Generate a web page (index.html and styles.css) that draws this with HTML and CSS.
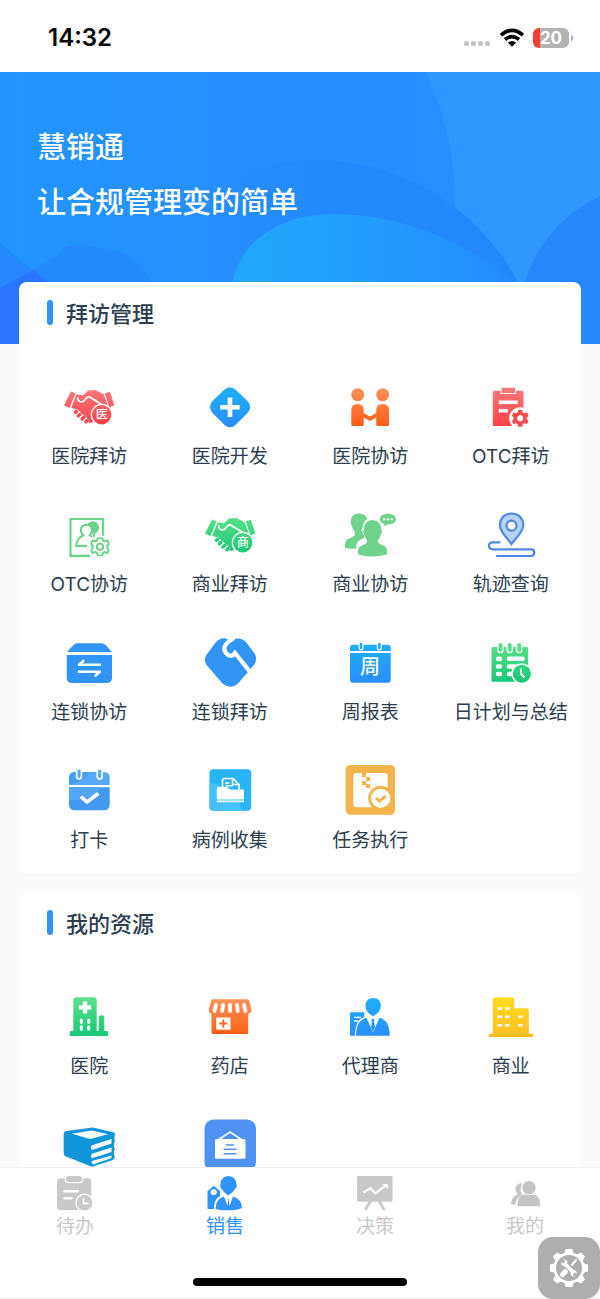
FILE: index.html
```html
<!DOCTYPE html>
<html lang="zh-CN">
<head>
    <meta charset="UTF-8">
    <meta name="viewport" content="width=device-width, initial-scale=1.0">
    <title>慧销通</title>
    <link rel="stylesheet" href="styles.css">
</head>
<body>

    <!-- shared gradients and symbols -->
    <svg class="defs" aria-hidden="true">
        <defs>
            <linearGradient id="red" gradientUnits="userSpaceOnUse" x1="0" y1="6" x2="0" y2="46"><stop offset="0" stop-color="#fb7c80"/><stop offset="1" stop-color="#fd3f45"/></linearGradient>
            <linearGradient id="blue" gradientUnits="userSpaceOnUse" x1="0" y1="6" x2="0" y2="46"><stop offset="0" stop-color="#1fb0fb"/><stop offset="1" stop-color="#2b8dfd"/></linearGradient>
            <linearGradient id="orange" gradientUnits="userSpaceOnUse" x1="0" y1="6" x2="0" y2="46"><stop offset="0" stop-color="#fe9560"/><stop offset="1" stop-color="#fe5a10"/></linearGradient>
            <linearGradient id="green" gradientUnits="userSpaceOnUse" x1="0" y1="6" x2="0" y2="46"><stop offset="0" stop-color="#60e08a"/><stop offset="1" stop-color="#14c877"/></linearGradient>
            <linearGradient id="yellow" gradientUnits="userSpaceOnUse" x1="0" y1="6" x2="0" y2="46"><stop offset="0" stop-color="#ffdc22"/><stop offset="1" stop-color="#ffbd22"/></linearGradient>
            <linearGradient id="glow" x1="0" y1="0" x2="1" y2="0"><stop offset="0" stop-color="#22a8fd"/><stop offset=".45" stop-color="#229dfd"/><stop offset="1" stop-color="#248bfd"/></linearGradient>
            <linearGradient id="fade" x1="0" y1="0" x2="1" y2="0"><stop offset=".25" stop-color="#2489fd" stop-opacity="0"/><stop offset=".5" stop-color="#2489fd"/><stop offset="1" stop-color="#2487fd"/></linearGradient>
            <linearGradient id="sky" x1="0" y1="0" x2="1" y2="0"><stop offset="0" stop-color="#2295fd"/><stop offset=".35" stop-color="#268ffd"/><stop offset="1" stop-color="#288ffd"/></linearGradient>
        </defs>
        <symbol id="shake" viewBox="0 0 52 52">
            <path d="M8 10.500L12.500 12.200L6.500 27L1 24.600ZM41.800 12.200L47 10.800L51.300 24.300L46.300 26.500Z"/>
            <path d="M13.600 13.200L20 14.300L25 9.600L32 9L40.600 13L45.300 26L42 32L28 42Q25.500 42.500 24.500 40L14 29L8.200 26.500Z"/>
            <path d="M14.500 16.500Q15 22 20 20.500Q22.500 18.500 24 16.500Q26 15 29 17.500L41 24.800" fill="none" stroke="#fff" stroke-width="1.800"/>
            <path d="M9.500 30L14 28L26 39L25.500 43H21Z" fill="#fff"/>
            <path d="M12.300 31.300L13.500 30.400M15.300 34.800L17 33.300M19 38L20.800 36.300M23 40.600L24.300 39.500" fill="none" stroke="currentColor" stroke-width="3.400" stroke-linecap="round"/>
            <circle cx="38.700" cy="33.700" r="11" fill="#fff"/>
            <circle cx="38.700" cy="33.700" r="9.700"/>
        </symbol>
        <symbol id="gear" viewBox="-10 -10 20 20">
            <path d="M-2.200 -9.600H2.200L3 -6.800L5 -5.700L7.800 -6.600L9.600 -3L7.600 -1V1L9.600 3L7.800 6.600L5 5.700L3 6.800L2.200 9.600H-2.200L-3 6.800L-5 5.700L-7.800 6.600L-9.600 3L-7.600 1V-1L-9.600 -3L-7.800 -6.600L-5 -5.700L-3 -6.800Z"/>
        </symbol>
    </svg>

    <header class="status">
        <span class="time">14:32</span>
        <span class="signals">
            <svg width="28" height="20" viewBox="0 0 28 20" fill="#c4c4c4"><circle cx="3.500" cy="15.500" r="2.600"/><circle cx="10.500" cy="15.500" r="2.600"/><circle cx="17.500" cy="15.500" r="2.600"/><circle cx="24.500" cy="15.500" r="2.600"/></svg>
            <svg width="26" height="20" viewBox="0 0 26 20" fill="none" stroke="#000" stroke-width="3.600"><path d="M2 7.200Q13 -2.600 24 7.200"/><path d="M6 11.500Q13 5.600 20 11.500"/><path d="M13 18.800L8.800 14.600Q13 11.200 17.200 14.600Z" fill="#000" stroke="none"/></svg>
            <span class="battery">20</span>
        </span>
    </header>

    <main class="content">
        <section class="hero">
            <svg class="hero-bg" viewBox="0 0 600 272" preserveAspectRatio="none" aria-hidden="true">
                <rect width="600" height="272" fill="url(#sky)"/>
                <path d="M425 0Q455 60 455 130Q455 200 430 272H600V0Z" fill="#3097fd"/>
                <circle cx="316" cy="316" r="228" fill="url(#fade)"/>
                <circle cx="660" cy="253" r="142" fill="#2687fc"/>
                <path d="M232 214C240 165 285 142 333 142C400 142 470 170 518 214Z" fill="url(#glow)"/>
                <path d="M33 198Q62 182 67 174Q95 174 119 180Q145 190 151 214H50Z" fill="#2489fd"/>
                <path d="M0 170Q15 186 33 198L0 216Z" fill="#2487fd"/>
                <path d="M0 216L33 198L50 212V272H0Z" fill="#2b74fd"/>
            </svg>
            <h1 class="hero-text">慧销通<br>让合规管理变的简单</h1>
        </section>

        <section class="card card-first">
            <h2 class="card-title">拜访管理</h2>
            <nav class="grid">
                <a class="item" href="#">
                    <svg class="icon" viewBox="0 0 52 52"><use href="#shake" fill="url(#red)" color="#fc484d"/><text class="badge" x="38.700" y="38">医</text></svg>
                    <span>医院拜访</span>
                </a>
                <a class="item" href="#">
                    <svg class="icon" viewBox="0 0 52 52">
                        <path d="M20 9Q26 3.600 32 9L43.500 20Q49 26 43.500 32L32 43.500Q26 49 20 43.500L8.500 32Q3.500 26 8.500 20Z" fill="url(#blue)"/>
                        <path d="M26 16.500V36M16.300 26.300H35.700" stroke="#fff" stroke-width="4.600"/>
                    </svg>
                    <span>医院开发</span>
                </a>
                <a class="item" href="#">
                    <svg class="icon" viewBox="0 0 52 52" fill="url(#orange)">
                        <circle cx="13.700" cy="13.700" r="6.500"/><circle cx="38.700" cy="13.700" r="6.500"/>
                        <path d="M7.300 29Q7.300 23 13.500 23Q19.700 23 19.700 29V32L26 35.500L32.300 32V29Q32.300 23 38.600 23Q45 23 45 29V43.500Q45 45 43.500 45H33.800Q32.300 45 32.300 43.500V36.500L26 40L19.700 36.500V43.500Q19.700 45 18.200 45H8.800Q7.300 45 7.300 43.500Z"/>
                    </svg>
                    <span>医院协访</span>
                </a>
                <a class="item" href="#">
                    <svg class="icon" viewBox="0 0 52 52" fill="url(#red)">
                        <rect x="7.800" y="9.700" width="30.700" height="35.300" rx="1.500"/>
                        <rect x="15.500" y="6" width="15.500" height="7" fill="#fff"/>
                        <rect x="16.500" y="6.700" width="13.500" height="5.300"/>
                        <path d="M13.800 21.300H32.800M13.800 29.700H22.800" stroke="#fff" stroke-width="3.400"/>
                        <circle cx="35.200" cy="37.300" r="11" fill="#fff"/>
                        <use href="#gear" x="26.500" y="28.600" width="17.400" height="17.400" fill="#fb4a50"/>
                        <circle cx="35.200" cy="37.300" r="3" fill="#fff"/>
                    </svg>
                    <span>OTC拜访</span>
                </a>
                <a class="item" href="#">
                    <svg class="icon" viewBox="0 0 52 52" fill="none" stroke="#6fd28c" stroke-width="2.200">
                        <path d="M40 27V10H7.500V46.800H27"/>
                        <circle cx="29.800" cy="18.500" r="6.300" fill="#6fd28c" stroke="none"/>
                        <path d="M31 25V29" stroke-width="2"/>
                        <path d="M24 37H13.200Q14 28.500 20.500 26.200Q17.500 24 17.800 20.500Q18.500 16 23.500 15.800Q28.800 16.200 29 21Q29 24 26.800 26.200L29 28" fill="#fff" stroke-width="2"/>
                        <circle cx="37" cy="37.700" r="11.500" fill="#fff" stroke="none"/>
                        <use href="#gear" x="27.500" y="28.200" width="19" height="19"/>
                        <circle cx="37" cy="37.700" r="3.200"/>
                    </svg>
                    <span>OTC协访</span>
                </a>
                <a class="item" href="#">
                    <svg class="icon" viewBox="0 0 52 52"><use href="#shake" fill="url(#green)" color="#22cc7b"/><text class="badge" x="38.700" y="38">商</text></svg>
                    <span>商业拜访</span>
                </a>
                <a class="item" href="#">
                    <svg class="icon" viewBox="0 0 52 52" fill="#6fd38b">
                        <path d="M7 12Q7 4.500 15 4.500Q22 4.800 23 10Q19 13 18.800 18L17.500 21Q18 24 20 26L20 29Q14 31 12.500 35L12 39.500Q5 40.500 1 38.500Q.5 32 4 30Q9.500 28 11 26V23Q8 20 8 17L6.800 15Z"/>
                        <path d="M28.300 11Q37 11.500 37.200 20L38 23L36.500 26Q36 29 33.800 31Q33.500 34 36 35Q41.500 37 42.500 39Q43.500 42 43 45.500Q36 47.500 28.500 47.500Q20 47.500 14.200 45.500Q13.500 41 15 38.500Q17 36.500 22 34.500Q23.500 33 23 31Q20.800 29 20.300 26L19 23L19.800 20Q20 11.500 28.300 11Z"/>
                        <path d="M43.800 4.800C48.500 4.800 52 7 52 10.300C52 13.500 48.500 15.500 44 15.500L40 17.200L40.500 15C37.500 14 35.800 12.500 35.800 10.300C35.800 7 39.500 4.800 43.800 4.800Z"/>
                        <path d="M39 10.300H41.300M42.800 10.300H45.100M46.600 10.300H48.900" stroke="#fff" stroke-width="2"/>
                    </svg>
                    <span>商业协访</span>
                </a>
                <a class="item" href="#">
                    <svg class="icon" viewBox="0 0 52 52" fill="none" stroke="#5089e2" stroke-width="2.200" stroke-linecap="round">
                        <path d="M26.500 35C23 30 14.800 23 14.800 16Q15.500 5 26.500 4.500Q37.700 5 38.300 16C38.300 23 30 30 26.500 35Z" fill="#b6d1fa"/>
                        <circle cx="26.500" cy="16.700" r="5" fill="#fff"/>
                        <path d="M14.500 33.300H8Q4 33.300 4 36.800Q4 40.300 8 40.300H46Q49.300 40.300 49.300 43.600Q49.300 47 46 47H12"/>
                    </svg>
                    <span>轨迹查询</span>
                </a>
                <a class="item" href="#">
                    <svg class="icon" viewBox="0 0 52 52" fill="#3394f8">
                        <path d="M4 15L10 8.500Q12 6.300 15 6.300H38Q41 6.300 43 8.500L49 15Z"/>
                        <path d="M3.700 18H49V40.500Q49 46 43.500 46H9.200Q3.700 46 3.700 40.500Z"/>
                        <path d="M20.300 24L16 27.700H36.800M16 34.700H36.800L32.500 38.500" fill="none" stroke="#fff" stroke-width="2.600" stroke-linecap="round" stroke-linejoin="round"/>
                    </svg>
                    <span>连锁协访</span>
                </a>
                <a class="item" href="#">
                    <svg class="icon" viewBox="0 0 52 52">
                        <path d="M12 5Q16.500 .5 22 1.500L26 4L30 2Q37 0 42 5L50.500 16.500Q54 22 50 28L34 46.500Q26.500 53 18.500 46.500L2.500 28Q-1 22.500 3 17Z" fill="#3394f8"/>
                        <path d="M47 36L31 16Q28 20.500 23.500 17.500Q18.500 13 21.500 8Q24.500 4 30 1" fill="none" stroke="#fff" stroke-width="4.200"/>
                    </svg>
                    <span>连锁拜访</span>
                </a>
                <a class="item" href="#">
                    <svg class="icon" viewBox="0 0 52 52">
                        <rect x="6" y="7.700" width="40.700" height="38" rx="3" fill="url(#blue)"/>
                        <path d="M6 15H46.700" stroke="#fff" stroke-width="2"/>
                        <path d="M17 6.500V11M35.300 6.500V11" stroke="#fff" stroke-width="5" stroke-linecap="round"/>
                        <path d="M17 7V11M35.300 7V11" stroke="#22a9fb" stroke-width="2.600" stroke-linecap="round"/>
                        <text class="week" x="26" y="37">周</text>
                    </svg>
                    <span>周报表</span>
                </a>
                <a class="item" href="#">
                    <svg class="icon" viewBox="0 0 52 52" fill="url(#green)">
                        <rect x="6.500" y="10" width="36.700" height="34.700" rx="1.500"/>
                        <path d="M15.500 8V13M24.800 8V13M34.200 8V13" stroke="#fff" stroke-width="6.500" stroke-linecap="round"/>
                        <path d="M15.500 8V13M24.800 8V13M34.200 8V13" stroke="#58dc88" stroke-width="3.800" stroke-linecap="round"/>
                        <path d="M13 21.700H15M13 29.500H15M13 37H15M24 21.700H37.500M24 29.500H30M24 37H28" stroke="#fff" stroke-width="4.600" stroke-linecap="round"/>
                        <circle cx="36.800" cy="36.700" r="10.500" fill="#fff"/>
                        <circle cx="36.800" cy="36.700" r="9"/>
                        <path d="M36 31.500V36.800L39.500 40.500" fill="none" stroke="#fff" stroke-width="2"/>
                    </svg>
                    <span>日计划与总结</span>
                </a>
                <a class="item" href="#">
                    <svg class="icon" viewBox="0 0 52 52">
                        <path d="M6 20V13Q6 7 12 7H40.700Q46.700 7 46.700 13V20Z" fill="#59a9f8"/>
                        <path d="M6 20V13Q6 7 12 7H27Q20 17 6 20Z" fill="#459ef5"/>
                        <path d="M6 22.200H46.700V39.300Q46.700 45.300 40.700 45.300H12Q6 45.300 6 39.300Z" fill="#4399f0"/>
                        <path d="M6 35Q30 36 38 22.200H6Z" fill="#55a6f7"/>
                        <path d="M16 4.500V11.500M36.700 4.500V11.500" stroke="#fff" stroke-width="6.500" stroke-linecap="round"/>
                        <path d="M16 6V11.500M36.700 6V11.500" stroke="#59a9f8" stroke-width="3.200" stroke-linecap="round"/>
                        <path d="M19 32.700L24 37L34.300 29.300" fill="none" stroke="#fff" stroke-width="3.600" stroke-linecap="round"/>
                    </svg>
                    <span>打卡</span>
                </a>
                <a class="item" href="#">
                    <svg class="icon" viewBox="0 0 52 52">
                        <rect x="5.500" y="4.300" width="41.700" height="41.400" rx="4" fill="#28b3f5"/>
                        <path d="M5.500 18Q30 18 38 45.700H9.500Q5.500 45.700 5.500 41.700Z" fill="#45bff8"/>
                        <path d="M18.500 23V15.500Q18.500 13.500 20.500 13.500H29L35 19.500V24M28.500 14V19.500H34.500M21 18H25.500M21 20.800H29" fill="none" stroke="#fff" stroke-width="1.600"/>
                        <path d="M12.800 23Q12.800 22 14 22H23.500L26 24.500H39Q40 24.500 40 25.500V34.500H12.800ZM12.800 35.500H40V37.300H12.800Z" fill="#fff"/>
                    </svg>
                    <span>病例收集</span>
                </a>
                <a class="item" href="#">
                    <svg class="icon" viewBox="0 0 52 52">
                        <rect x="1.700" y="0" width="49.300" height="49.700" rx="4.500" fill="#f4b44c"/>
                        <rect x="9.300" y="8" width="34.400" height="34.200" rx="3" fill="#fff"/>
                        <path d="M18 8H22V12H18ZM22 12H26V16H22ZM18 16H22V20H18ZM22 19H26V23H22Z" fill="#f4b44c"/>
                        <circle cx="36.700" cy="33.300" r="12.500" fill="#f4b44c"/>
                        <circle cx="36.700" cy="33.300" r="9.600" fill="#fff"/>
                        <path d="M32 33L35.500 36.300L41.500 31" fill="none" stroke="#f4b44c" stroke-width="3"/>
                    </svg>
                    <span>任务执行</span>
                </a>
            </nav>
        </section>

        <section class="card">
            <h2 class="card-title">我的资源</h2>
            <nav class="grid">
                <a class="item" href="#">
                    <svg class="icon" viewBox="0 0 52 52" fill="url(#green)">
                        <path d="M10.300 9.300Q10.300 6.300 13.300 6.300H30.700Q33.700 6.300 33.700 9.300V40H35.700V26.500Q35.700 24.300 38.500 24.300Q41.300 24.300 41.300 26.500V40H44Q45 40 45 41V44Q45 45 44 45H7.700Q6.700 45 6.700 44V41Q6.700 40 7.700 40H10.300Z"/>
                        <path d="M22 10.300V22.500M15.900 16.400H28.100" stroke="#fff" stroke-width="4.400"/>
                        <path d="M18.300 29V31.500M25.700 29V31.500M18.300 35.700V38.200M25.700 35.700V38.200" stroke="#fff" stroke-width="3" stroke-linecap="round"/>
                    </svg>
                    <span>医院</span>
                </a>
                <a class="item" href="#">
                    <svg class="icon" viewBox="0 0 52 52" fill="url(#orange)">
                        <path d="M8.500 8.300H43.500Q45 8.300 45.300 10L47.500 19.500Q47.500 22 44.200 22.500V41.500Q44.200 43 42.700 43H9Q7.500 43 7.500 41.500V22.500Q4.500 22 4.800 19.500L7 10Q7.300 8.300 8.500 8.300Z"/>
                        <path d="M12 14L10.500 20M19 14L18.200 20M26 14V20M33 14L33.800 20M40 14L41.500 20" stroke="#fff" stroke-width="3.800" stroke-linecap="round"/>
                        <rect x="12.200" y="26.500" width="14.300" height="12.200" fill="#fff"/>
                        <path d="M19.300 28.500V36.700M15.200 32.600H23.400" stroke="#fe6c28" stroke-width="2"/>
                    </svg>
                    <span>药店</span>
                </a>
                <a class="item" href="#">
                    <svg class="icon" viewBox="0 0 52 52" fill="url(#blue)">
                        <path d="M7.300 21.300H20.300V44.700H6V22.600Q6 21.300 7.300 21.300Z"/>
                        <path d="M10 26.300H17M10 30H14" stroke="#fff" stroke-width="1.300"/>
                        <path d="M11 45.500C11 34 14 27.500 21 26L29 27L37.500 26.500C43 28 46 34 46 45.500Z" fill="#fff"/>
                        <path d="M12 44.700C12 34.500 15.500 28.500 22.500 26.700L29 41.500L35.500 26.700C42.500 28.500 45.700 34.500 45.700 44.700Z"/>
                        <path d="M29 7Q36.800 7.200 36.800 15Q36.500 21.500 29 25.300Q21.500 21.500 21.500 15Q21.500 7.200 29 7Z"/>
                        <path d="M27.300 28H30.700L30 30.500L31 36L29 41L27 36L28 30.500Z"/>
                    </svg>
                    <span>代理商</span>
                </a>
                <a class="item" href="#">
                    <svg class="icon" viewBox="0 0 52 52" fill="url(#yellow)">
                        <path d="M7.800 9Q7.800 6.300 10.500 6.300H26.500Q29.200 6.300 29.200 9V17.300H41.500Q43.800 17.300 43.800 19.600V42.700H47.500Q48.500 42.700 48.500 44.300Q48.500 46 47.500 46H4.500Q3.500 46 3.500 44.300Q3.500 42.700 4.500 42.700H7.800Z"/>
                        <path d="M12.500 17.500H17M20 17.500H24.500M12.500 25.800H17M20 25.800H24.500M12.500 34.200H17M20 34.200H24.500M33.300 25.800H37.800M33.300 34.200H37.800" stroke="#fff" stroke-width="2.600"/>
                    </svg>
                    <span>商业</span>
                </a>
                <a class="item" href="#" aria-label="产品">
                    <svg class="icon" viewBox="0 0 52 52">
                        <path d="M3 12L30 8.500L51 13.500Q53 14.500 51.500 16.500V20L52 22L51 24V28L52 30L51 32V36L52 38L50 41L29 47.700L3 37.500Q.7 36.500 .7 34.500V14.500Q.7 12.500 3 12Z" fill="#1296db"/>
                        <path d="M9 14.800L29 11.500L45 15.300L27 20Z" fill="#fff"/>
                        <path d="M29 26.200L48.500 20V24.500L29 31Q26.500 28.500 29 26.200ZM29 34.700L48.500 28.500V33L29 39.300Q26.500 37 29 34.700ZM29 42L48.500 36.500V39L31 45.300Q27.500 45 29 42Z" fill="#fff"/>
                    </svg>
                </a>
                <a class="item" href="#" aria-label="公告">
                    <svg class="icon" viewBox="0 0 52 52">
                        <rect x=".5" y=".5" width="51.500" height="51.500" rx="9" fill="#5092f3"/>
                        <path d="M14 21L26 13L38 21" fill="none" stroke="#fff" stroke-width="1.600"/>
                        <rect x="11" y="20" width="30.500" height="19.700" rx="1.500" fill="#fff"/>
                        <path d="M22 26H30M19.500 30.300H32.500M19.500 34.700H32.500" stroke="#5092f3" stroke-width="1.600"/>
                    </svg>
                </a>
            </nav>
        </section>
    </main>

    <footer class="tabbar">
        <nav class="tabs">
            <a class="tab" href="#">
                <svg viewBox="0 0 36 36" fill="#c9c9c9">
                    <rect x="0" y="3.300" width="34.300" height="31.700" rx="3.500"/>
                    <rect x="7.700" y="0" width="18.600" height="8.300" rx="4" fill="#fff"/>
                    <rect x="9" y="1" width="16" height="6" rx="3"/>
                    <path d="M7.500 16.300H20.500M7.500 23.300H14.500" stroke="#fff" stroke-width="2.600" stroke-linecap="round"/>
                    <circle cx="27.500" cy="27.700" r="9.200" fill="#fff"/><circle cx="27.500" cy="27.700" r="7.800"/>
                    <path d="M26.500 23.500V28.500H31.500" fill="none" stroke="#fff" stroke-width="1.800"/>
                </svg>
                <span>待办</span>
            </a>
            <a class="tab active" href="#">
                <svg viewBox="0 0 36 36" fill="#2e93fb">
                    <path d="M.5 16L6.800 10.700L13 16V34H.5Z"/>
                    <circle cx="6.700" cy="17.300" r="3" fill="#fff"/>
                    <path d="M7 35.500C6.500 25 11 20.500 17 20H26L36 35.500Z" fill="#fff"/>
                    <path d="M8.500 34Q8.500 24 17 21.500L20.500 31L21.300 22L22.500 31L26 21.500Q35 24.500 35 33Q30 35.300 21.500 35.300Q12 35.300 8.500 34Z"/>
                    <path d="M21.300 1Q29 1.500 29.200 9Q30.500 10 29 13Q26 17.500 21.300 20.500Q17 18 13.800 13Q12.500 10 13.600 9Q14 1.500 21.300 1Z"/>
                </svg>
                <span>销售</span>
            </a>
            <a class="tab" href="#">
                <svg viewBox="0 0 36 36" fill="#c9c9c9">
                    <rect x="0" y="1" width="35.500" height="25.700" rx="1.500"/>
                    <path d="M13 27L8.700 34M22.500 27L26.800 34" stroke="#c9c9c9" stroke-width="2.800" stroke-linecap="round"/>
                    <path d="M6.500 17.700L13.300 13.200L18.500 18.300L28.500 10.500" fill="none" stroke="#fff" stroke-width="2.200"/>
                    <path d="M25 9H31V14Z" fill="#fff"/>
                </svg>
                <span>决策</span>
            </a>
            <a class="tab" href="#">
                <svg viewBox="0 0 36 36" fill="#c4c4c4">
                    <path d="M15 8Q7.500 9 8.500 15Q9 17.500 10.800 19Q4 22 4 29.500H8.500Q9.500 22.500 15 20Q12 13 15.500 8Z"/>
                    <circle cx="22" cy="12.700" r="6.700"/>
                    <path d="M10.300 31.300Q10.300 20 18 19.200Q22 21.500 26 19.200Q33.300 20 33.300 31.300Z"/>
                </svg>
                <span>我的</span>
            </a>
        </nav>
        <div class="home-bar"></div>
    </footer>

    <button class="tools" type="button" aria-label="工具">
        <svg width="40" height="40" viewBox="0 0 40 40">
            <path d="M16.500 1H23.500L24.500 5L28.500 6.600L32 4.500L36 8.500L33.800 12.500L35 15.500L39 16.500V23.500L35 24.500L33.800 27.500L36 31.500L32 35.500L28.500 33.400L24.500 35L23.500 39H16.500L15.500 35L11.500 33.400L8 35.500L4 31.500L6.200 27.500L5 24.500L1 23.500V16.500L5 15.500L6.200 12.500L4 8.500L8 4.500L11.500 6.600L15.500 5Z" fill="#fff"/>
            <circle cx="20" cy="20" r="13" fill="#aeaeae"/>
            <path d="M15.500 24.500L21 19M22.500 17.500L27.500 11.500" stroke="#fff" stroke-width="2"/>
            <path d="M13.500 26.500L16.500 23.500" stroke="#fff" stroke-width="5" stroke-linecap="round"/>
            <path d="M15 15L25 25" stroke="#aeaeae" stroke-width="6"/>
            <path d="M15 15L25 25" stroke="#fff" stroke-width="3.800"/>
            <path d="M11.800 14L15 16L16 12L13.500 11.500Q17.500 10.500 18.500 14Q18 18 14.500 18Q12 17 11.800 14ZM28.200 26L25 24L24 28L26.500 28.500Q22.500 29.500 21.500 26Q22 22 25.500 22Q28 23 28.200 26Z" fill="#fff"/>
        </svg>
    </button>

</body>
</html>
```
FILE: styles.css
```css
* {
    box-sizing: border-box;
}

body {
    margin: 0;
    height: 100vh;
    display: flex;
    flex-direction: column;
    overflow: hidden;
    background-color: #fff;
    color: #2c3e50;
    font-family: Inter, "Noto Sans CJK SC", sans-serif;
}

a {
    color: inherit;
    text-decoration: none;
}

svg {
    display: block;
}

.defs {
    position: absolute;
    width: 0;
    height: 0;
}

/* status bar */
.status {
    flex: none;
    display: flex;
    justify-content: space-between;
    align-items: center;
    height: 72px;
    padding: 4px 31px 0 48px;
    color: #000;
}

.time {
    font-size: 24px;
    font-weight: 600;
    line-height: 28px;
}

.signals {
    display: flex;
    align-items: center;
    gap: 8px;
}

.battery {
    position: relative;
    width: 36px;
    height: 20px;
    border-radius: 6px;
    background: linear-gradient(90deg, #fb3b30 7px, #b3b3b3 7px);
    color: #fff;
    font-size: 17px;
    font-weight: 700;
    line-height: 20px;
    text-align: center;
}

.battery::after {
    content: "";
    position: absolute;
    right: -4px;
    top: 7px;
    width: 2px;
    height: 6px;
    border-radius: 0 2px 2px 0;
    background: #b3b3b3;
}

/* scrolling part */
.content {
    flex: 1;
    min-height: 0;
    overflow: hidden;
    background-color: #fafafa;
}

.hero {
    position: relative;
    height: 272px;
    padding: 48px 37px;
}

.hero-bg {
    position: absolute;
    top: 0;
    left: 0;
    width: 100%;
    height: 100%;
}

.hero-text {
    position: relative;
    margin: 0;
    color: #fff;
    font-size: 29px;
    font-weight: 500;
    line-height: 55px;
}

.card {
    position: relative;
    margin: 0 19px 19px;
    padding-bottom: 17px;
    border-radius: 8px;
    background-color: #fff;
}

.card-first {
    margin-top: -62px;
}

.card-title {
    display: flex;
    align-items: center;
    gap: 13px;
    height: 60px;
    margin: 0 0 2px;
    padding-left: 28px;
    font-size: 22px;
    font-weight: 500;
}

.card-title::before {
    content: "";
    width: 6px;
    height: 25px;
    border-radius: 3px;
    background-color: #3394f8;
}

.grid {
    display: grid;
    grid-template-columns: repeat(4, 1fr);
}

.item {
    display: flex;
    flex-direction: column;
    align-items: center;
    gap: 10px;
    height: 128px;
    padding-top: 37px;
    font-size: 19px;
    line-height: 28px;
    white-space: nowrap;
}

.icon {
    width: 52px;
    height: 52px;
}

.badge,
.week {
    fill: #fff;
    font-size: 12px;
    font-weight: 500;
    text-anchor: middle;
}

.week {
    font-size: 20px;
}

/* bottom tabs */
.tabbar {
    flex: none;
    display: flex;
    flex-direction: column;
    justify-content: space-between;
    align-items: center;
    height: 132px;
    padding-bottom: 12px;
    border-top: 1px solid #f0f0f0;
    border-bottom: 1px solid #ececec;
    background-color: #fff;
}

.tabs {
    display: flex;
    width: 100%;
}

.tab {
    flex: 1;
    display: flex;
    flex-direction: column;
    align-items: center;
    gap: 2px;
    padding-top: 7px;
    color: #c8c8c8;
    font-size: 19px;
    line-height: 28px;
}

.tab svg {
    width: 36px;
    height: 36px;
}

.tab.active {
    color: #2e93fb;
}

.home-bar {
    width: 214px;
    height: 8px;
    border-radius: 4px;
    background-color: #000;
}

.tools {
    position: fixed;
    right: 0;
    bottom: 0;
    display: flex;
    justify-content: center;
    align-items: center;
    width: 62px;
    height: 62px;
    padding: 0;
    border: 0;
    border-radius: 15px;
    background-color: #aeaeae;
}
```
